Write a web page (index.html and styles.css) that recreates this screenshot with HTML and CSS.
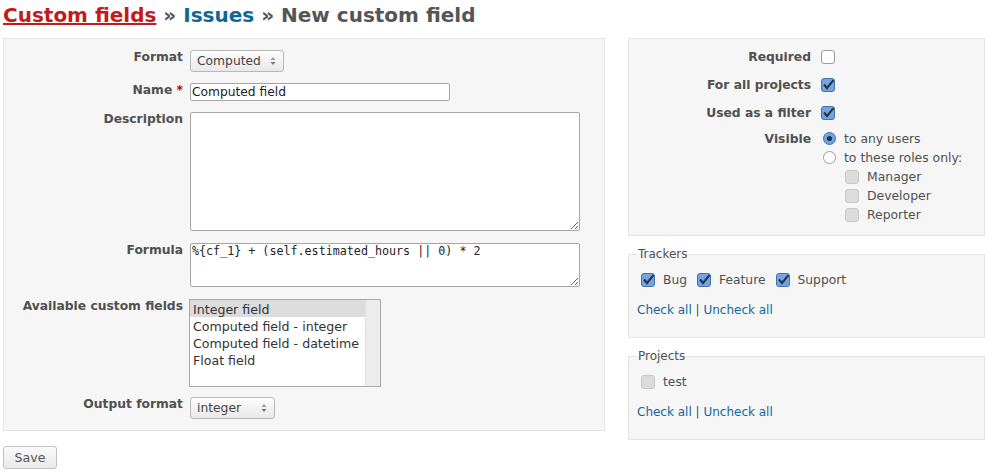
FILE: index.html
```html
<!DOCTYPE html>
<html>
<head>
<meta charset="utf-8">
<title>New custom field</title>
<link rel="stylesheet" href="styles.css">
</head>
<body>
<div class="content">
  <h2 class="title"><a class="crumb-active" href="#">Custom fields</a> » <a class="crumb" href="#">Issues</a> » New custom field</h2>
  <div class="columns">
    <div class="left">
      <div class="box form-box">
        <div class="row">
          <label class="lbl">Format</label>
          <div class="select sel-format"><span>Computed</span><svg class="arrows" width="6" height="10" viewBox="0 0 6 10"><path d="M0.5 4 L3 1 L5.5 4Z" fill="#9a9a9a"/><path d="M0.5 6 L3 9 L5.5 6Z" fill="#777"/></svg></div>
        </div>
        <div class="row">
          <label class="lbl">Name <span class="req">*</span></label>
          <input class="text-in" type="text" value="Computed field">
        </div>
        <div class="row">
          <label class="lbl">Description</label>
          <textarea class="ta ta-desc"></textarea>
        </div>
        <div class="row r-formula">
          <label class="lbl">Formula</label>
          <textarea class="ta ta-formula">%{cf_1} + (self.estimated_hours || 0) * 2</textarea>
        </div>
        <div class="row r-list">
          <label class="lbl">Available custom fields</label>
          <div class="listbox">
            <div class="options">
              <div class="opt-item selected">Integer field</div>
              <div class="opt-item">Computed field - integer</div>
              <div class="opt-item">Computed field - datetime</div>
              <div class="opt-item">Float field</div>
            </div>
            <div class="scroll"></div>
          </div>
        </div>
        <div class="row r-output">
          <label class="lbl">Output format</label>
          <div class="select sel-output"><span>integer</span><svg class="arrows" width="6" height="10" viewBox="0 0 6 10"><path d="M0.5 4 L3 1 L5.5 4Z" fill="#9a9a9a"/><path d="M0.5 6 L3 9 L5.5 6Z" fill="#777"/></svg></div>
        </div>
      </div>
      <button class="save" type="button">Save</button>
    </div>

    <div class="right">
      <div class="box right-box">
        <div class="rrow">
          <span class="rlabel">Required</span>
          <svg class="cb" width="14" height="14" viewBox="0 0 14 14"><rect x="0.5" y="0.5" width="13" height="13" rx="2.5" fill="#fff" stroke="#9c9c9c"/></svg>
        </div>
        <div class="rrow">
          <span class="rlabel">For all projects</span>
          <svg class="cb" width="14" height="14" viewBox="0 0 14 14"><rect x="0.5" y="0.5" width="13" height="13" rx="2.5" fill="#74a3e2" stroke="#4571a9"/><path d="M3 6.5 L6 10 L12.5 2.2" fill="none" stroke="#263549" stroke-width="2.1"/></svg>
        </div>
        <div class="rrow">
          <span class="rlabel">Used as a filter</span>
          <svg class="cb" width="14" height="14" viewBox="0 0 14 14"><rect x="0.5" y="0.5" width="13" height="13" rx="2.5" fill="#74a3e2" stroke="#4571a9"/><path d="M3 6.5 L6 10 L12.5 2.2" fill="none" stroke="#263549" stroke-width="2.1"/></svg>
        </div>
        <div class="rrow rrow-visible">
          <span class="rlabel">Visible</span>
          <div class="vis-opts">
            <div class="vline"><svg class="radio" width="13" height="13" viewBox="0 0 13 13"><circle cx="6.5" cy="6.5" r="6" fill="#74a3e2" stroke="#4571a9"/><circle cx="6.5" cy="6.5" r="2.6" fill="#22344a"/></svg><span>to any users</span></div>
            <div class="vline"><svg class="radio" width="13" height="13" viewBox="0 0 13 13"><circle cx="6.5" cy="6.5" r="6" fill="#fff" stroke="#9c9c9c"/></svg><span>to these roles only:</span></div>
            <div class="vline sub"><svg class="cb" width="14" height="14" viewBox="0 0 14 14"><rect x="0.5" y="0.5" width="13" height="13" rx="2.5" fill="#dcdcdc" stroke="#c8c8c8"/></svg><span>Manager</span></div>
            <div class="vline sub"><svg class="cb" width="14" height="14" viewBox="0 0 14 14"><rect x="0.5" y="0.5" width="13" height="13" rx="2.5" fill="#dcdcdc" stroke="#c8c8c8"/></svg><span>Developer</span></div>
            <div class="vline sub"><svg class="cb" width="14" height="14" viewBox="0 0 14 14"><rect x="0.5" y="0.5" width="13" height="13" rx="2.5" fill="#dcdcdc" stroke="#c8c8c8"/></svg><span>Reporter</span></div>
          </div>
        </div>
      </div>

      <fieldset class="box fs">
        <legend>Trackers</legend>
        <div class="cb-row">
          <label class="floating"><svg class="cb" width="14" height="14" viewBox="0 0 14 14"><rect x="0.5" y="0.5" width="13" height="13" rx="2.5" fill="#74a3e2" stroke="#4571a9"/><path d="M3 6.5 L6 10 L12.5 2.2" fill="none" stroke="#263549" stroke-width="2.1"/></svg>Bug</label>
          <label class="floating"><svg class="cb" width="14" height="14" viewBox="0 0 14 14"><rect x="0.5" y="0.5" width="13" height="13" rx="2.5" fill="#74a3e2" stroke="#4571a9"/><path d="M3 6.5 L6 10 L12.5 2.2" fill="none" stroke="#263549" stroke-width="2.1"/></svg>Feature</label>
          <label class="floating"><svg class="cb" width="14" height="14" viewBox="0 0 14 14"><rect x="0.5" y="0.5" width="13" height="13" rx="2.5" fill="#74a3e2" stroke="#4571a9"/><path d="M3 6.5 L6 10 L12.5 2.2" fill="none" stroke="#263549" stroke-width="2.1"/></svg>Support</label>
        </div>
        <p class="links"><a href="#">Check all</a> | <a href="#">Uncheck all</a></p>
      </fieldset>

      <fieldset class="box fs">
        <legend>Projects</legend>
        <div class="cb-row">
          <label class="floating"><svg class="cb" width="14" height="14" viewBox="0 0 14 14"><rect x="0.5" y="0.5" width="13" height="13" rx="2.5" fill="#dcdcdc" stroke="#c8c8c8"/></svg>test</label>
        </div>
        <p class="links"><a href="#">Check all</a> | <a href="#">Uncheck all</a></p>
      </fieldset>
    </div>
  </div>
</div>
</body>
</html>
```

FILE: styles.css
```css
* { box-sizing: border-box; }
html, body { margin: 0; padding: 0; background: #fff; }
body {
  font-family: "DejaVu Sans", Verdana, sans-serif;
  font-size: 12px;
  color: #505050;
}
.content { padding: 3px 3px 0 3px; }

.title {
  margin: 0 0 11px 0;
  font-size: 20px;
  line-height: 24px;
  font-weight: bold;
  color: #555;
}
.title a { text-decoration: none; }
.title .crumb-active { color: #c61a1a; text-decoration: underline; }
.title .crumb { color: #116699; }

.columns { display: flex; gap: 23px; align-items: flex-start; }
.left { width: 602px; }
.right { width: 357px; }

.box { background: #f6f6f6; border: 1px solid #e4e4e4; }

/* left form */
.form-box {
  padding: 11px 0 11px 0;
  display: flex;
  flex-direction: column;
  gap: 11px;
}
.row {
  display: grid;
  grid-template-columns: 179px 1fr;
  column-gap: 7px;
  align-items: start;
}
.r-formula { margin-top: 1px; }
.r-list { margin-top: 1px; }
.r-output { margin-top: -1px; }
.lbl {
  text-align: right;
  font-weight: bold;
  font-size: 12.3px;
  line-height: 14px;
  color: #505050;
}
.req { color: #bb0000; }

.select {
  display: flex;
  align-items: center;
  justify-content: space-between;
  height: 22px;
  padding: 0 7px 0 6px;
  border: 1px solid #b8b8b8;
  border-radius: 3px;
  background: linear-gradient(#fdfdfd, #e8e8e8);
  font-size: 12.3px;
  color: #444;
}
.sel-format { width: 94px; }
.sel-output { width: 85px; }
.arrows { display: block; }

.text-in {
  width: 260px;
  height: 18px;
  margin: 0;
  padding: 0 1px;
  border: 1px solid #a6a6a6;
  border-radius: 2px;
  background: #fff;
  font-family: "DejaVu Sans", Verdana, sans-serif;
  font-size: 12.25px;
  color: #222;
  outline: none;
}
.ta {
  display: block;
  width: 390px;
  margin: 0;
  padding: 0 1px;
  border: 1px solid #a6a6a6;
  border-radius: 2px;
  background: #fff;
  resize: both;
  outline: none;
}
.ta-desc { height: 119px; font-family: "DejaVu Sans", Verdana, sans-serif; font-size: 12px; }
.ta-formula {
  height: 44px;
  font-family: "DejaVu Sans Mono", monospace;
  font-size: 11.7px;
  color: #222;
}

.listbox {
  width: 192px;
  height: 88px;
  margin-left: -1px;
  border: 1px solid #a9a9a9;
  background: #fff;
  display: flex;
}
.options { flex: 1; }
.opt-item {
  height: 17px;
  line-height: 17px;
  padding: 1px 0 0 3px;
  font-size: 12.6px;
  color: #333;
  white-space: nowrap;
}
.opt-item.selected { background: #dcdcdc; }
.scroll {
  width: 15px;
  background: #ececec;
  border-left: 1px solid #e0e0e0;
}

.save {
  display: block;
  margin: 15px 0 0 0;
  width: 54px;
  height: 23px;
  padding: 0;
  border: 1px solid #c2c2c2;
  border-radius: 3px;
  background: linear-gradient(#fafafa, #e9e9e9);
  font-family: "DejaVu Sans", Verdana, sans-serif;
  font-size: 12.6px;
  color: #555;
}

/* right column */
.right-box { padding: 4px 0 11px 0; }
.rrow {
  display: grid;
  grid-template-columns: 182px auto;
  column-gap: 10px;
  align-items: center;
  height: 28px;
}
.rlabel { text-align: right; font-weight: bold; font-size: 12.3px; line-height: 14px; }
.cb { display: block; flex: none; }
.rrow-visible {
  height: auto;
  align-items: start;
  padding-top: 2px;
}
.rrow-visible .rlabel { line-height: 19px; padding-top: 1px; }
.vis-opts { display: flex; flex-direction: column; font-size: 12.4px; }
.vline {
  display: flex;
  align-items: center;
  height: 19px;
  line-height: 19px;
  gap: 8px;
}
.radio { display: block; flex: none; margin-left: 2px; }
.vline.sub { padding-left: 24px; }

.fs {
  margin: 11px 0 0 0;
  padding: 9px 8px 18px 8px;
  min-width: 0;
}
.fs legend {
  padding: 0 1px;
  line-height: 14px;
  color: #505050;
}
.cb-row {
  display: flex;
  align-items: center;
  height: 20px;
  line-height: 20px;
  font-size: 12.3px;
}
.floating {
  display: inline-flex;
  align-items: center;
  gap: 8px;
  margin-right: 10px;
}
.floating .cb { margin-left: 4px; }
.floating + .floating .cb { margin-left: 0; }
.links {
  margin: 11px 0 0 0;
  line-height: 18px;
}
.links a { color: #116699; text-decoration: none; }
```
